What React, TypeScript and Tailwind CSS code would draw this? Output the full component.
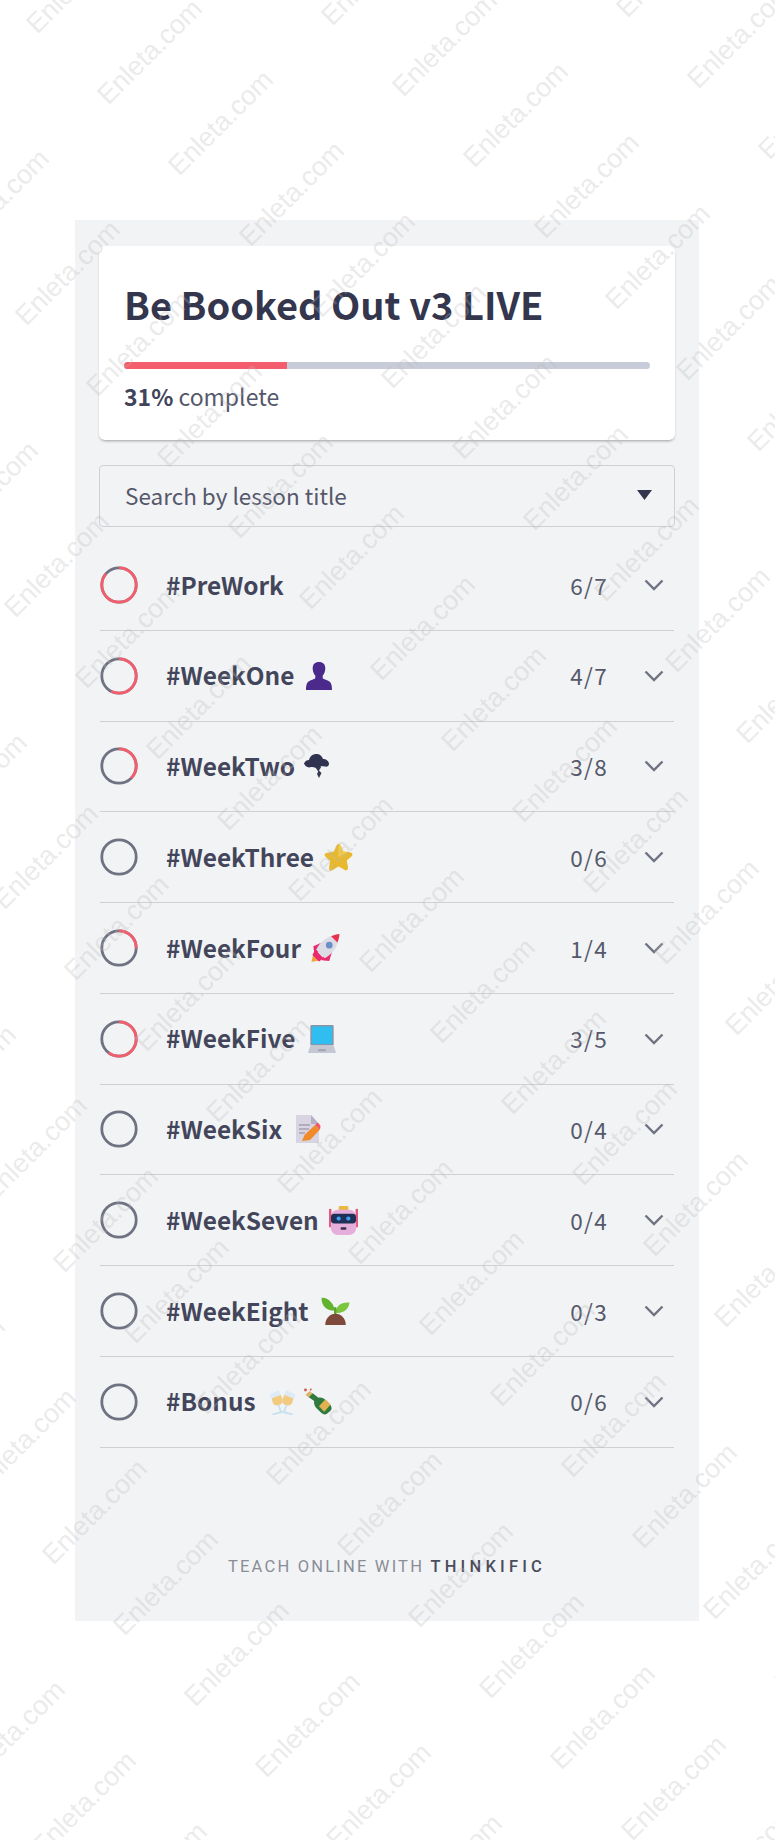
import React from "react";

const FONT = `font-['Noto_Sans_CJK_SC','Source_Sans_Pro','Noto_Sans',sans-serif]`;

function Ring({ pct }: { pct: number }) {
  const r = 17.2;
  const c = 2 * Math.PI * r;
  return (
    <svg width="38" height="38" viewBox="0 0 38 38" className="shrink-0 -rotate-90">
      <circle cx="19" cy="19" r={r} fill="none" stroke="#6f7282" strokeWidth="2.8" />
      {pct > 0 && (
        <circle cx="19" cy="19" r={r} fill="none" stroke="#f45d6b" strokeWidth="2.8" strokeDasharray={`${pct * c} ${c}`} />
      )}
    </svg>
  );
}

const Person = () => (
  <svg width="26" height="28" viewBox="0 0 28 30" className="ml-[2px]">
    <path d="M14 0c4.500 0 6.800 2.500 6.800 6.800 0 3.700-1.500 6.200-2.800 7.700v2.700c0 1 3.500 1.800 6.300 3.100 2.700 1.200 3.700 4 3.700 9.700H0c0-5.700 1-8.500 3.700-9.700 2.800-1.300 6.300-2.100 6.300-3.100v-2.700C8.700 13 7.200 10.500 7.200 6.800 7.200 2.500 9.500 0 14 0z" fill="#4b2a8c" />
  </svg>
);
const Storm = () => (
  <svg width="25" height="24" viewBox="0 0 25 24" className="-ml-[1px]">
    <path d="M0 9.500C1 7 3 6 5 6c1-4 4-6 7.500-6 3.500 0 5.500 2 6.500 5 3 0 6 2 6 5 0 2-2 3-4 2.500L17 12c-1 2-3 3-5 2-2-1-3-1-5-1-3 1.500-6-1-7-3.500z" fill="#2f3350" />
    <path d="M11.500 13.500l6-1-2.500 4 2.500 2.500-2.500 5-2-4 1.200-2.500z" fill="#363a52" />
  </svg>
);
const Star = () => (
  <svg width="29" height="28" viewBox="0 0 30 30">
    <path d="M15 1c1.300 0 2.200 1.200 3.300 3.700l1.800 4.300 5 .6c3 .4 4.900 1 4.900 2.600 0 1.200-1.300 2.300-3.400 4.100l-2.800 2.500 1 5c.6 3 .4 4.800-.8 5.400-1.200.5-2.600-.4-5-2L15 25.300l-4 2.400c-2.400 1.600-3.800 2.500-5 2-1.200-.6-1.400-2.400-.8-5.400l1-5-2.800-2.500C1.300 15 0 13.900 0 12.700c0-1.600 1.900-2.200 4.900-2.600l5-.6 1.800-4.300C12.800 2.200 13.700 1 15 1z" fill="#e8b92e" />
    <path d="M15 1c1.300 0 2.200 1.200 3.300 3.700l1.800 4.300 5 .6L15 15z" fill="#f3cb46" />
  </svg>
);
const Rocket = () => (
  <svg width="29" height="28" viewBox="0 0 30 30">
    <path d="M0 30l2-9 7 7z" fill="#f3a13a" />
    <path d="M2 13l9-4-2 10-6 2zM19 29l3-10-9 3-2 6z" fill="#e82a6e" />
    <path d="M5 17C9 8 17 2 30 0c-1 13-7 21-16 26z" fill="#dcdce6" />
    <path d="M21 2.500C24 1 27 .3 30 0c-.2 3-1 6-2.200 9z" fill="#e8304f" />
    <circle cx="19" cy="12" r="3.600" fill="#6d8fc7" />
    <path d="M4 17l9 9-5 3.500-7-7z" fill="#e82a6e" />
  </svg>
);
const Laptop = () => (
  <svg width="28" height="28" viewBox="0 0 30 30" className="ml-[2px]">
    <rect x="2.500" y="0" width="25" height="22" rx="1.500" fill="#8e92a3" />
    <rect x="4" y="1.500" width="22" height="19" fill="#30bdf0" />
    <path d="M2.500 22h25l2.500 8H0z" fill="#c5c7d2" />
    <rect x="11" y="26" width="8" height="2" fill="#9ea1b0" />
  </svg>
);
const Memo = () => (
  <svg width="25" height="28" viewBox="0 0 25 28" className="ml-[4px]">
    <path d="M0 0h15l8 9v19H0z" fill="#d8d4e2" />
    <path d="M15 0l8 9h-8z" fill="#b5b0c4" />
    <path d="M3 10h11M3 14h10M3 18h6" stroke="#8a8698" strokeWidth="1.200" />
    <path d="M6 26l2.500-6L19 10l5 4.500L14 25z" fill="#f08a2a" />
    <path d="M19 10l2-2c1-.8 4 2.500 3.500 3.500l-.5 3z" fill="#f0566a" />
  </svg>
);
const Robot = () => (
  <svg width="29" height="29" viewBox="0 0 30 30">
    <rect x="0" y="3" width="2.500" height="19" fill="#e5577e" />
    <rect x="27.500" y="3" width="2.500" height="19" fill="#e5577e" />
    <rect x="10" y="0" width="10" height="5" rx="1.500" fill="#e9b93f" />
    <rect x="2" y="4" width="26" height="26" rx="7" fill="#e6aeda" />
    <rect x="2" y="8" width="26" height="10" rx="3.500" fill="#1f3157" />
    <circle cx="10" cy="13" r="2.200" fill="#3ba0ee" />
    <circle cx="20" cy="13" r="2.200" fill="#3ba0ee" />
    <rect x="12" y="22" width="6" height="2.500" rx="1" fill="#3a2c55" />
  </svg>
);
const Seedling = () => (
  <svg width="29" height="28" viewBox="0 0 30 30" className="ml-[2px]">
    <path d="M14.500 18C15 8 7 0 0 1c0 9 6 14 14.500 13.500z" fill="#62b32f" />
    <path d="M15 18c0-9 7-13 15-12-1 7-6 12-15 11z" fill="#7cc63d" />
    <rect x="13.500" y="11" width="2.500" height="10" fill="#5b9e2c" />
    <path d="M4 30c0-7 5-12 11-12s11 5 11 12z" fill="#7d4a3c" />
  </svg>
);
const Clink = () => (
  <svg width="27" height="26" viewBox="0 0 28 28">
    <path d="M0 6l10-5 4 10c.8 3-1 6-4.500 6.500-3 .5-5-.5-6-3z" fill="#dcebf5" />
    <path d="M2.500 10l9.500-3.500L14 11c.8 3-1 6-4.500 6.500-3 .5-5-.5-6-3z" fill="#f2cb80" />
    <path d="M9.500 17l3 8M3 27.500l11-3" stroke="#c8e0ef" strokeWidth="2" />
    <path d="M28 6L18 1l-4 10c-.8 3 1 6 4.500 6.500 3 .5 5-.5 6-3z" fill="#dcebf5" />
    <path d="M25.500 10L16 6.500 14 11c-.8 3 1 6 4.500 6.500 3 .5 5-.5 6-3z" fill="#f2cb80" />
    <path d="M18.500 17l-3 8M25 27.500l-11-3" stroke="#c8e0ef" strokeWidth="2" />
  </svg>
);
const Bottle = () => (
  <svg width="29" height="27" viewBox="0 0 30 28">
    <circle cx="1.500" cy="2" r="1.500" fill="#d65a4a" />
    <circle cx="7" cy="1.500" r="1" fill="#d65a4a" />
    <path d="M1.500 7L6 3l3 3-4 4z" fill="#d9b36a" />
    <path d="M5 9.500L9 5.500l6 4.500c3-.5 5.500 .5 8 3l4 4c2 2.500 2 5 .5 6.500L24 26.500c-2 1.500-4.500 1-6.500-1l-4-4c-2.500-2.500-3.500-5-3-8z" fill="#2f7a3e" />
    <path d="M15.500 19l6.500-7 5.500 5-6.500 7.500z" fill="#e3b14f" />
  </svg>
);

const rows: { title: string; done: string; pct: number; icons?: React.ReactNode }[] = [
  { title: "#PreWork", done: "6/7", pct: 6 / 7 },
  { title: "#WeekOne", done: "4/7", pct: 4 / 7, icons: <Person /> },
  { title: "#WeekTwo", done: "3/8", pct: 3 / 8, icons: <Storm /> },
  { title: "#WeekThree", done: "0/6", pct: 0, icons: <Star /> },
  { title: "#WeekFour", done: "1/4", pct: 1 / 4, icons: <Rocket /> },
  { title: "#WeekFive", done: "3/5", pct: 3 / 5, icons: <Laptop /> },
  { title: "#WeekSix", done: "0/4", pct: 0, icons: <Memo /> },
  { title: "#WeekSeven", done: "0/4", pct: 0, icons: <Robot /> },
  { title: "#WeekEight", done: "0/3", pct: 0, icons: <Seedling /> },
  {
    title: "#Bonus",
    done: "0/6",
    pct: 0,
    icons: (
      <span className="ml-[3px] flex items-center gap-[8px]">
        <Clink />
        <Bottle />
      </span>
    ),
  },
];

function Row({ title, done, pct, icons }: (typeof rows)[number]) {
  return (
    <div className="flex h-[90.75px] items-center border-b border-[#cfd0d4] pr-[10px]">
      <Ring pct={pct} />
      <div className="ml-[28px] flex flex-1 items-center gap-[10px] text-[24.4px] leading-none font-semibold text-[#43465a]">
        <span>{title}</span>
        {icons}
      </div>
      <span className="text-[22.500px] leading-none tracking-[1.300px] text-[#55586a]">{done}</span>
      <svg width="20" height="12" viewBox="0 0 20 12" className="ml-[36px]">
        <path d="M1.500 1.500L10 10l8.500-8.500" fill="none" stroke="#6f7282" strokeWidth="2.400" />
      </svg>
    </div>
  );
}

function Watermarks() {
  const items: { x: number; y: number }[] = [];
  for (let a = -12; a < 40; a++) {
    for (let b = -8; b < 10; b++) {
      const x = 150 + a * 71 + b * 295;
      const y = 52 + a * 71 - b * 8;
      if (x > -120 && x < 895 && y > -120 && y < 1960) items.push({ x, y });
    }
  }
  return (
    <div className="pointer-events-none absolute inset-0 overflow-hidden">
      {items.map((p, i) => (
        <span
          key={i}
          className="absolute -translate-x-1/2 -translate-y-1/2 -rotate-45 font-['Liberation_Sans',sans-serif] text-[27px] leading-none whitespace-nowrap text-[#b9b9b9]/30"
          style={{ left: p.x, top: p.y }}
        >
          Enleta.com
        </span>
      ))}
    </div>
  );
}

export default function App() {
  return (
    <div className={`relative h-[1840px] overflow-hidden bg-white pt-[220px] pl-[75px] ${FONT}`}>
      <div className="flex h-[1401px] w-[624px] flex-col bg-[#f2f3f5] px-[24px] pt-[26px]">
        <div className="h-[194px] rounded-[6px] bg-white px-[25px] pt-[32px] shadow-[0_2px_3px_-1px_rgba(0,0,0,0.35)]">
          <h1 className="text-[38px] leading-[52px] font-semibold text-[#33364d]">Be Booked Out v3 LIVE</h1>
          <div className="mt-[32px] h-[7px] overflow-hidden rounded-full bg-[#c8ccd8]">
            <div className="h-full w-[31%] bg-[#f45d6b]" />
          </div>
          <p className="mt-[11px] text-[23px] leading-[32px] text-[#55586a]">
            <span className="font-semibold text-[#41445a]">31%</span> complete
          </p>
        </div>
        <div className="mt-[25px] flex h-[62px] items-center justify-between rounded-[4px] border border-[#cfd0d4] pr-[22px] pb-[2px] pl-[25px]">
          <span className="text-[22.500px] leading-none text-[#55586a]">Search by lesson title</span>
          <svg width="15" height="10" viewBox="0 0 15 10">
            <path d="M0 0h15L7.500 10z" fill="#33364d" />
          </svg>
        </div>
        <div className="mx-[1px] mt-[13px]">
          {rows.map((r) => (
            <Row key={r.title} {...r} />
          ))}
        </div>
        <div className="mt-[111px] text-center font-['Roboto',sans-serif] text-[16.500px] leading-none tracking-[2.200px] text-[#8a8d98]">
          TEACH ONLINE WITH <span className="font-medium tracking-[4.200px] text-[#4a4d5c]">THINKIFIC</span>
        </div>
      </div>
      <Watermarks />
    </div>
  );
}
